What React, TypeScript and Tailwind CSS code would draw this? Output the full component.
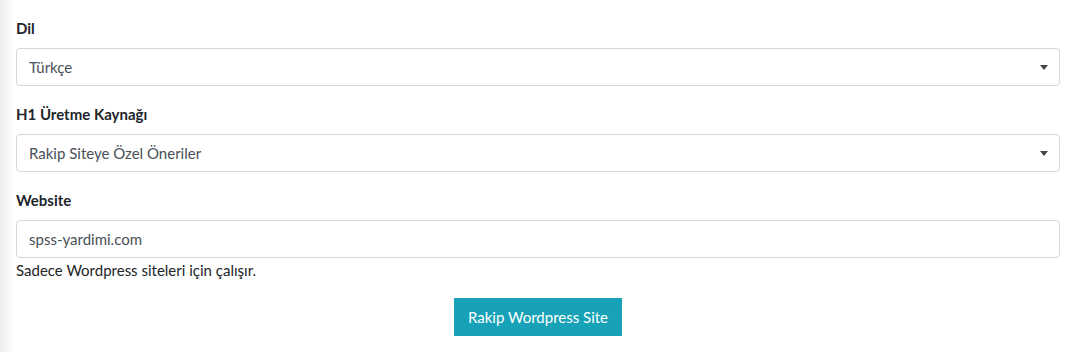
import React from "react";

const font = { fontFamily: "Lato, 'Noto Sans', sans-serif" };

const Caret = () => (
  <span className="pointer-events-none absolute right-[11px] top-1/2 -mt-[2px] h-0 w-0 border-x-[4px] border-t-[5px] border-x-transparent border-t-[#444]" />
);

const SelectBox: React.FC<{ value: string }> = ({ value }) => (
  <div className="relative flex h-[38px] items-center rounded border border-[#d2d6de] bg-white px-3 text-[15px] text-[#495057]">
    {value}
    <Caret />
  </div>
);

const Label: React.FC<{ children: React.ReactNode }> = ({ children }) => (
  <label className="mb-2 block h-6 text-[15px] font-bold leading-6 text-[#212529]">
    {children}
  </label>
);

export default function App() {
  return (
    <div
      className="min-h-[352px] w-[1080px] bg-[linear-gradient(to_right,#ececec,#ffffff_14px)] pl-4 pr-5 pt-4 pb-4"
      style={font}
    >
      <div className="mb-4">
        <Label>Dil</Label>
        <SelectBox value="Türkçe" />
      </div>

      <div className="mb-4">
        <Label>H1 Üretme Kaynağı</Label>
        <SelectBox value="Rakip Siteye Özel Öneriler" />
      </div>

      <div className="mb-4">
        <Label>Website</Label>
        <input
          readOnly
          value="spss-yardimi.com"
          className="block h-[38px] w-full rounded border border-[#d2d6de] bg-white px-3 text-[15px] text-[#495057] outline-none"
        />
        <p className="h-6 text-[15px] leading-6 text-[#212529]">
          Sadece Wordpress siteleri için çalışır.
        </p>
      </div>

      <div className="flex justify-center">
        <button className="h-[38px] bg-[#17a2b8] px-[14px] text-[15px] text-white">
          Rakip Wordpress Site
        </button>
      </div>
    </div>
  );
}
